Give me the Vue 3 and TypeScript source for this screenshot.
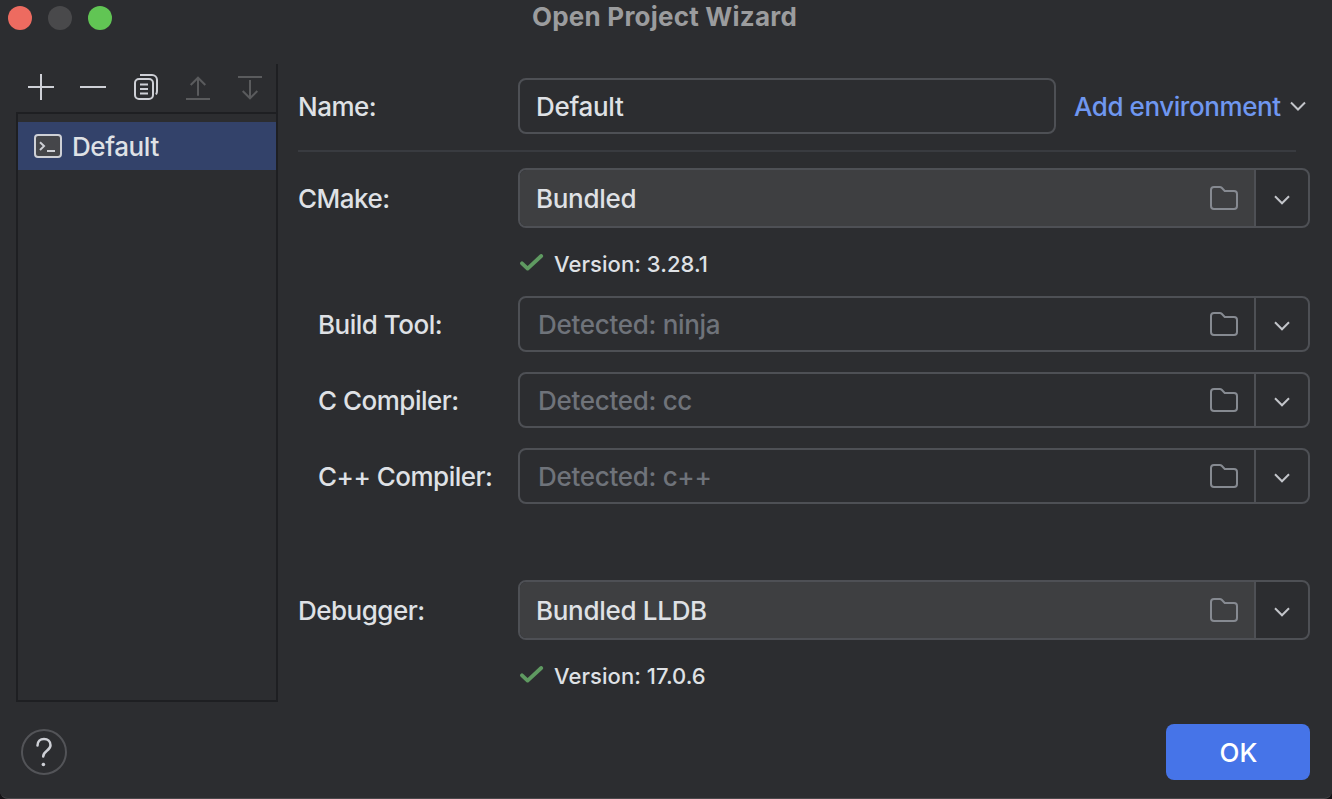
<script setup lang="ts">
interface Tool {
  key: string
  label: string
  value: string
  detected: boolean
  nested: boolean
  version?: string
}

const tools: Tool[] = [
  { key: 'cmake', label: 'CMake:', value: 'Bundled', detected: false, nested: false, version: 'Version: 3.28.1' },
  { key: 'build', label: 'Build Tool:', value: 'Detected: ninja', detected: true, nested: true },
  { key: 'cc', label: 'C Compiler:', value: 'Detected: cc', detected: true, nested: true },
  { key: 'cxx', label: 'C++ Compiler:', value: 'Detected: c++', detected: true, nested: true },
  { key: 'debugger', label: 'Debugger:', value: 'Bundled LLDB', detected: false, nested: false, version: 'Version: 17.0.6' },
]
</script>

<template>
  <div class="window">
    <header class="titlebar">
      <div class="lights">
        <span class="light close"></span>
        <span class="light minimize"></span>
        <span class="light zoom"></span>
      </div>
      <h1 class="title">Open Project Wizard</h1>
      <div></div>
    </header>

    <div class="body">
      <aside class="sidebar">
        <div class="toolbar">
          <svg class="tool" viewBox="0 0 32 32"><path d="M16 3v26M3 16h26" /></svg>
          <svg class="tool" viewBox="0 0 32 32"><path d="M3 16h26" /></svg>
          <svg class="tool copy" viewBox="0 0 32 32">
            <rect x="5" y="8" width="18" height="20" rx="4" />
            <path d="M10 4h12a5 5 0 0 1 5 5v11c0 1.500-.3 2.500-1 3.500" />
            <path d="M10 13.500h8M10 18h8M10 22.500h8" />
          </svg>
          <svg class="tool off" viewBox="0 0 32 32"><path d="M4 28h24M16 24.700V6.500M8.700 14L16 6.700l7.300 7.300" /></svg>
          <svg class="tool off" viewBox="0 0 32 32"><path d="M4 6h24M16 9v18.500M8.700 20L16 27.300l7.300-7.300" /></svg>
        </div>
        <div class="list">
          <div class="item">
            <svg class="terminal" viewBox="0 0 28 24">
              <rect x="1" y="1" width="26" height="22" rx="3" />
              <path d="M6 8.300l4 3.800L6 16M13 17h8" />
            </svg>
            <span class="text">Default</span>
          </div>
        </div>
      </aside>

      <main class="form">
        <div class="row name-row">
          <label class="label text">Name:</label>
          <div class="field name"><span class="text">Default</span></div>
          <a class="add">
            <span class="text">Add environment</span>
            <svg class="chevron" viewBox="0 0 18 12"><path d="M2 2.500l7 7 7-7" /></svg>
          </a>
        </div>
        <div class="separator"></div>

        <section v-for="t in tools" :key="t.key" class="tool-row" :class="t.key">
          <div class="row">
            <label class="label text" :class="{ nested: t.nested }">{{ t.label }}</label>
            <div class="combo" :class="{ detected: t.detected }">
              <div class="value">
                <span class="text">{{ t.value }}</span>
                <svg class="folder" viewBox="0 0 30 26">
                  <path d="M5 2h5.800c.8 0 1.400.3 1.900.8L15.700 6H25a3 3 0 0 1 3 3v12a3 3 0 0 1-3 3H5a3 3 0 0 1-3-3V5a3 3 0 0 1 3-3z" />
                </svg>
              </div>
              <div class="arrow">
                <svg class="chevron" viewBox="0 0 18 12"><path d="M2 2.300l7 7 7-7" /></svg>
              </div>
            </div>
          </div>
          <div v-if="t.version" class="status">
            <svg class="check" viewBox="0 0 26 20"><path d="M4 9.300l5.600 5.300L23.200 2" /></svg>
            <span>{{ t.version }}</span>
          </div>
        </section>
      </main>
    </div>

    <footer class="footer">
      <button class="help" aria-label="Help">
        <svg viewBox="0 0 46 46">
          <path d="M16.500 16.500c0-4 2.700-6.500 6.500-6.500s6.500 2.500 6.500 6.300c0 5.400-7.300 5.700-7.300 11.200" />
          <circle cx="22.400" cy="35.500" r="1.800" />
        </svg>
      </button>
      <button class="ok"><span class="text">OK</span></button>
    </footer>
  </div>
</template>

<style>
body {
  margin: 0;
  background: #151316;
  overflow: hidden;
}
</style>

<style scoped>
.window {
  box-sizing: border-box;
  width: 1332px;
  height: 799px;
  background: #2c2d30;
  color: #dfe1e5;
  font-family: Inter, "Liberation Sans", sans-serif;
  font-size: 26px;
  font-weight: 450;
  letter-spacing: -0.3px;
  line-height: 32px;
  display: flex;
  flex-direction: column;
  border-bottom: 1px solid #49484b;
  border-radius: 0 0 8px 8px;
  overflow: hidden;
}
.titlebar {
  height: 64px;
  flex: none;
  display: grid;
  grid-template-columns: 1fr auto 1fr;
  align-items: start;
}
.lights {
  display: flex;
  gap: 16px;
  padding: 6px 0 0 8px;
}
.light {
  width: 24px;
  height: 24px;
  border-radius: 50%;
}
.close { background: #ed6b60; }
.minimize { background: #49494b; }
.zoom { background: #61c554; }
.title {
  margin: 1px 3px 0 0;
  font-size: 26px;
  font-weight: 700;
  letter-spacing: 0.22px;
  color: #9b9c9e;
}
.text {
  padding-top: 2px;
}
span.text { display: inline-block; }
.body {
  display: flex;
  height: 638px;
  flex: none;
}
.sidebar {
  box-sizing: border-box;
  width: 262px;
  margin-left: 16px;
  border-right: 2px solid #1e1f22;
  display: flex;
  flex-direction: column;
}
.toolbar {
  height: 48px;
  display: flex;
  align-items: center;
  gap: 20px;
  padding-left: 9px;
}
.tool {
  width: 32px;
  height: 32px;
  flex: none;
  margin-top: -2px;
  fill: none;
  stroke: #ced0d6;
  stroke-width: 2;
}
.copy { margin-left: 1px; }
.off { stroke: #5a5b5d; }
.list {
  flex: 1;
  border: 2px solid #1e1f22;
  border-right: 0;
  padding-top: 8px;
}
.item {
  height: 48px;
  background: #33426a;
  display: flex;
  align-items: center;
  gap: 10px;
  padding-left: 16px;
  letter-spacing: -0.4px;
}
.terminal {
  width: 28px;
  height: 24px;
  fill: #45464a;
  stroke: #ced0d6;
  stroke-width: 2;
}
.terminal path { fill: none; }
.form {
  margin-left: 20px;
  width: 1012px;
  padding-top: 14px;
}
.row {
  display: flex;
  align-items: center;
}
.label {
  box-sizing: border-box;
  width: 220px;
  flex: none;
  white-space: nowrap;
  letter-spacing: -0.5px;
}
.nested { padding-left: 20px; }
.field {
  box-sizing: border-box;
  height: 56px;
  border: 2px solid #4e5055;
  border-radius: 8px;
  padding-left: 16px;
  display: flex;
  align-items: center;
}
.name { width: 538px; }
.add {
  margin-left: 18px;
  color: #6f97f0;
  display: flex;
  align-items: center;
  gap: 8px;
  white-space: nowrap;
  letter-spacing: -0.43px;
}
.chevron {
  width: 18px;
  height: 12px;
  flex: none;
  fill: none;
  stroke: #c2c4c9;
  stroke-width: 2;
}
.separator {
  width: 998px;
  height: 2px;
  margin: 16px 0;
  background: #393b40;
}
.combo {
  box-sizing: border-box;
  width: 792px;
  height: 60px;
  border: 2px solid #4e5055;
  border-radius: 8px;
  display: flex;
  overflow: hidden;
}
.value {
  flex: 1;
  display: flex;
  align-items: center;
  justify-content: space-between;
  padding: 0 15px 0 16px;
  background: #3e3f41;
  border-right: 2px solid #4e5055;
}
.detected { height: 56px; }
.detected .value {
  background: transparent;
  color: #6f737a;
  padding-left: 18px;
}
.folder {
  width: 30px;
  height: 26px;
  fill: none;
  stroke: #868a91;
  stroke-width: 2;
}
.arrow {
  width: 52px;
  display: grid;
  place-items: center;
  padding-top: 3px;
}
.status {
  height: 32px;
  margin-top: 20px;
  padding-left: 220px;
  display: flex;
  align-items: center;
  gap: 10px;
  font-size: 22px;
  letter-spacing: 0.06px;
}
.check {
  width: 26px;
  height: 20px;
  fill: none;
  stroke: #5f9a61;
  stroke-width: 3.800;
  stroke-linecap: round;
  stroke-linejoin: round;
}
.cmake { height: 128px; }
.build, .cc { height: 76px; }
.cxx { height: 132px; }
.footer {
  height: 96px;
  box-sizing: border-box;
  display: flex;
  align-items: center;
  justify-content: space-between;
  padding: 4px 22px 0 21px;
}
button {
  box-sizing: border-box;
  padding: 0;
  font: inherit;
}
.help {
  width: 46px;
  height: 46px;
  border: 2px solid #535458;
  border-radius: 50%;
  background: transparent;
}
.help svg {
  display: block;
  width: 46px;
  height: 46px;
  margin: -2px;
  fill: none;
  stroke: #ced0d6;
  stroke-width: 2.500;
  stroke-linecap: round;
}
.help circle {
  fill: #ced0d6;
  stroke: none;
}
.ok {
  width: 144px;
  height: 56px;
  padding-left: 1px;
  border: 0;
  border-radius: 8px;
  background: #4674e8;
  color: #fff;
  font-weight: 500;
}
</style>
